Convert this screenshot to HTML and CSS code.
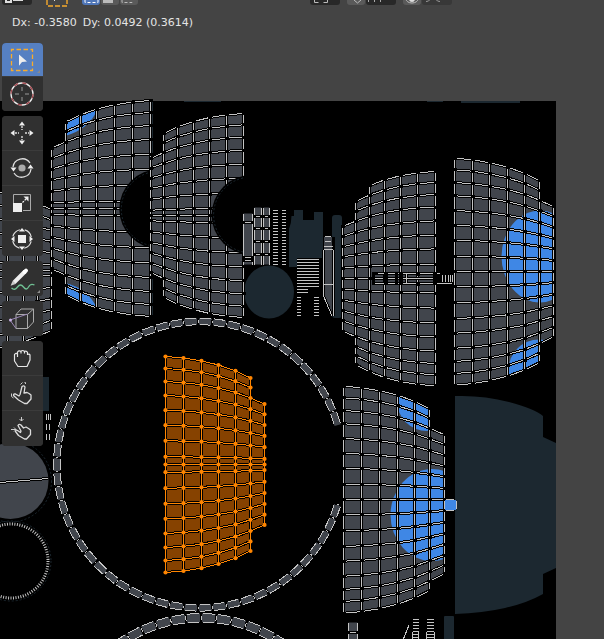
FILE: index.html
```
<!DOCTYPE html>
<html lang="en">
<head>
<meta charset="utf-8">
<title>UV Editor</title>
<link rel="stylesheet" href="styles.css">
</head>
<body>
<main class="editor">
  <svg class="canvas" id="canvas" role="img" aria-label="UV layout"></svg>

  <header class="header">
    <div class="header-set">
      <button class="chip wide" aria-label="Editor type"><svg width="30" height="5"><path d="M4 0v2h5V0M11 0h10" fill="none" stroke="#ddd" stroke-width="2"/></svg></button>
      <button class="chip bare" aria-label="Active tool"><svg width="22" height="7"><path d="M1 0v6h20V0" fill="none" stroke="#f5a92c" stroke-width="1.4" stroke-dasharray="5 2"/><path d="M8 0l1 1" stroke="#ddd"/></svg></button>
      <div class="chips">
        <button class="chip on" aria-label="New selection"><svg width="18" height="5"><path d="M3 0v2.500h13V0" fill="none" stroke="#fff" stroke-dasharray="3 2"/></svg></button>
        <button class="chip mid" aria-label="Extend selection"><svg width="18" height="5"><path d="M2 0h10v3H2z" fill="#bbb"/></svg></button>
        <button class="chip mid" aria-label="Subtract selection"><svg width="18" height="5"><path d="M2 0v2.500h10V0" fill="none" stroke="#bbb" stroke-dasharray="3 2"/></svg></button>
      </div>
    </div>
    <div class="header-set second">
      <button class="chip wide" aria-label="Pivot"><svg width="30" height="5"><path d="M4.500 0v2.500h4M17.500 0v2.500h-4" fill="none" stroke="#bbb"/></svg></button>
      <div class="chips">
        <button class="chip mid" aria-label="Snap"><svg width="18" height="5"><path d="M7 0l3.500 3L14 0" fill="none" stroke="#bbb"/></svg></button>
        <button class="chip wide" aria-label="Snap target"><svg width="30" height="5"><path d="M2.500 0v2M8.500 0v2M14.500 0v2" stroke="#aaa"/></svg></button>
      </div>
      <div class="chips">
        <button class="chip mid" aria-label="Proportional editing"><svg width="18" height="5"><ellipse cx="9" cy="-1" rx="6" ry="4" fill="none" stroke="#bbb"/><circle cx="9" cy="-1" r="3" fill="#ddd"/></svg></button>
        <button class="chip dim" aria-label="Falloff"><svg width="30" height="5"><path d="M4 1.500q3 0 4-2M18 1.500q-3 0-4-2" fill="none" stroke="#999"/></svg></button>
      </div>
    </div>
  </header>

  <p class="status"><span>Dx: -0.3580</span><span>Dy: 0.0492 (0.3614)</span></p>

  <nav class="toolbar" aria-label="Tools">
    <div class="group">
      <button class="tool active more" aria-label="Select box">
        <svg class="icon" viewBox="0 0 26 26"><rect x="2.500" y="2.500" width="21" height="21" fill="none" stroke="#f8ab2c" stroke-width="1.300" stroke-dasharray="4.500 2.500" stroke-dashoffset="2"/><path d="M10 7.500l8 7-5 .6-3 3.600z" fill="#eee"/></svg>
      </button>
      <button class="tool" aria-label="Cursor">
        <svg class="icon" viewBox="0 0 26 26"><g fill="none"><circle cx="13" cy="13" r="11" stroke="#eee" stroke-width="1.300"/><circle cx="13" cy="13" r="11" stroke="#a34a50" stroke-width="1.300" stroke-dasharray="4.320 4.320"/><path d="M13 6v4M13 16v4M6 13h4M16 13h4" stroke="#999"/></g></svg>
      </button>
    </div>
    <div class="group">
      <button class="tool" aria-label="Move">
        <svg class="icon" viewBox="0 0 26 26"><path d="M13 1.500l3 4h-6zM13 24.500l3-4h-6zM1.500 13l4-3v6zM24.500 13l-4-3v6z" fill="#eee"/><path d="M13 6v4M13 16v4M6 13h4M16 13h4" stroke="#ddd" stroke-width="1.400" stroke-dasharray="2 1"/></svg>
      </button>
      <button class="tool" aria-label="Rotate">
        <svg class="icon" viewBox="0 0 26 26"><circle cx="13" cy="13" r="3.600" fill="#aaa"/><path d="M4 12a9.300 9.300 0 0 1 17-4M22 14a9.300 9.300 0 0 1-17 4" fill="none" stroke="#ddd" stroke-width="1.300"/><path d="M1.500 12.500h6l-3 4zM18.500 13.500h6l-3-4z" fill="#eee"/></svg>
      </button>
      <button class="tool" aria-label="Scale">
        <svg class="icon" viewBox="0 0 26 26"><path d="M4.500 13V4.500h17v16H14" fill="none" stroke="#aaa"/><path d="M4 13h9v9H4z" fill="#eee"/><path d="M13.500 12.500l4-4" stroke="#eee" stroke-width="1.300" stroke-dasharray="2 1"/><path d="M19.500 6.500v5l-5-5z" fill="#eee"/></svg>
      </button>
      <button class="tool" aria-label="Transform">
        <svg class="icon" viewBox="0 0 26 26"><circle cx="13" cy="13" r="9.500" fill="none" stroke="#ddd" stroke-width="1.200" stroke-dasharray="10 4.920" stroke-dashoffset="-2.500"/><path d="M9 9h8v8H9zM13 2l3 3.500h-6zM13 24l3-3.500h-6zM2 13l3.500-3v6zM24 13l-3.500-3v6z" fill="#eee"/></svg>
      </button>
    </div>
    <div class="group">
      <button class="tool more" aria-label="Annotate">
        <svg class="icon" viewBox="0 0 26 26"><path d="M2.500 22q3 3 6-1t6 0 5 0 6-2" fill="none" stroke="#6fbf92" stroke-width="1.300"/><path d="M5 16.500L16 5.500" stroke="#eee" stroke-width="4"/><path d="M3.600 15l3 3-5 1.800z" fill="#ccc"/><path d="M15.500 6L17 4.600" stroke="#fff" stroke-width="4" stroke-linecap="round"/></svg>
      </button>
    </div>
    <div class="group">
      <button class="tool" aria-label="Rip region">
        <svg class="icon" viewBox="0 0 26 26"><path d="M7 8.500h11.500v14H7zM7 8.500l5-5.500h12.500l-6 5.500M24.500 3v13l-6 6.500" fill="none" stroke="#aaa"/><path d="M18.500 8L1 14l6 8.500" fill="none" stroke="#9a86b5"/><circle cx="1.500" cy="14" r="1.500" fill="#c9b3e6"/></svg>
      </button>
    </div>
    <div class="group">
      <button class="tool" aria-label="Pan">
        <svg class="icon" viewBox="0 0 26 26"><path d="M9 21.500L5.500 16V9.500q1.500-2 3-.5V7q1.500-2 3.500-.5 1.500-2 3.500 0 2-1 3 1v2q2-1 2.500.5v5L18 21.500zM8.500 9v3M12 6.500v2M15.500 6.500v2M18.500 9v1" fill="none" stroke="#e6e6e6" stroke-width="1.200" stroke-linejoin="round"/></svg>
      </button>
      <button class="tool" aria-label="Grab">
        <svg class="icon" viewBox="0 0 26 26"><path d="M15.500 23.500L9.500 20l-5-4.500q0-2 2-1.500l3.500 2 1-1.500 2-8q2-1.500 3 .5l-1 6 3-.5 2 1 2 1.500V19l-4 4.500z" fill="none" stroke="#ddd" stroke-width="1.300" stroke-linejoin="round"/><path d="M11.500 4.500l2-2M15.500 2.500h1V4M2.500 13.500v3l2 1.500" fill="none" stroke="#ccc"/></svg>
      </button>
      <button class="tool" aria-label="Pinch">
        <svg class="icon" viewBox="0 0 26 26"><path d="M15.500 23L9.500 19.500l-3-4q0-2 2-1l3 2 .5-1.500-3-5.500q1-2 3-.5l2.500 3 2.500-1 2.500 1.500 2 1.500v4.500l-4 4.500z" fill="none" stroke="#ddd" stroke-width="1.300" stroke-linejoin="round"/><path d="M12.500 1v4l-2-2M12.500 5l2-2M2 13.500h5l-2-2M7 13.500l-2 2" fill="none" stroke="#ccc"/></svg>
      </button>
    </div>
  </nav>
</main>
<script src="uv.js"></script>
</body>
</html>
```
FILE: styles.css
```
* {
  box-sizing: border-box;
}

body {
  margin: 0;
  background: #444;
  color: #e4e4e4;
  font: 11px/16px "DejaVu Sans", sans-serif;
}

.editor {
  position: relative;
  min-height: 100vh;
  overflow: hidden;
}

.canvas {
  position: absolute;
  inset: 0;
  width: 100%;
  height: 100%;
}

.header,
.status,
.toolbar {
  position: relative;
}

.header {
  display: flex;
  height: 7px;
  padding-left: 2px;
}

.header-set {
  display: flex;
  gap: 14px;
}

.header-set.second {
  gap: 7px;
  margin-left: 172px;
}

.chips {
  display: flex;
  gap: 1px;
}

button {
  padding: 0;
  border: 0;
  color: inherit;
  font: inherit;
}

.chip {
  display: flex;
  width: 18px;
  height: 5px;
  background: #282828;
  border-radius: 0 0 3px 3px;
}

.chip.wide {
  width: 30px;
}

.chip.bare {
  width: 22px;
  height: 7px;
  background: none;
}

.chip.on {
  background: #4f76b8;
}

.chip.mid {
  background: #5a5a5a;
}

.chip.dim {
  width: 30px;
  background: #383838;
}

.status {
  display: flex;
  gap: 6px;
  margin: 0;
  padding: 8px 12px 12px;
}

.toolbar {
  display: flex;
  flex-direction: column;
  gap: 5px;
  width: 41px;
  margin-left: 2px;
}

.group {
  overflow: hidden;
  background: #303030;
  border-radius: 4px;
}

.tool {
  position: relative;
  display: flex;
  align-items: center;
  justify-content: center;
  width: 100%;
  height: 35px;
  padding-right: 2px;
  background: #303030;
}

.tool:not(:last-child) {
  border-bottom: 1px solid #3b3b3b;
}

.group:first-child .tool {
  height: 34px;
}

.tool.active {
  background: #5680c2;
}

.tool.more::after {
  content: "";
  position: absolute;
  right: 3px;
  bottom: 3px;
  border-bottom: 3px solid #8a8a8a;
  border-left: 3px solid transparent;
}

.icon {
  width: 26px;
  height: 26px;
}

.face {
  fill: #41454c;
}

.back {
  fill: #1c2830;
}

.paint {
  fill: #3f87e5;
}

.void {
  fill: #000;
}

.rim {
  fill: none;
  stroke: #1c2830;
  stroke-dasharray: 2 2;
}

.shade,
.wire {
  fill: none;
  shape-rendering: crispEdges;
}

.shade {
  stroke: #000;
  stroke-width: 3px;
}

.shade.thin {
  stroke-width: 2px;
}

.wire {
  stroke: #c4c4c4;
  stroke-width: 1px;
}

.dots {
  fill: #000;
  shape-rendering: crispEdges;
}

.selected .face {
  fill: #864200;
}

.selected .wire {
  stroke: #ff8500;
}

.selected .dots {
  fill: #ff8500;
  shape-rendering: auto;
}
```
FILE: uv.js
```
const root = document.getElementById('canvas');
let out = '';
let clipCount = 0;

// Height of every column relative to the tallest one.
const PROFILE = [1, 0.986, 0.96, 0.921, 0.868, 0.801, 0.728];
// Row offsets from the centre line.
const BANDED = [-108, -96, -83, -69, -54.3, -39.3, -23.7, -7.7, 0, 7.7, 23.7, 39.3, 54.3, 69, 83, 96, 108];
const EVEN = [-113.3, -101.7, -89, -75.7, -61, -46, -31.3, -15.3, 0, 15.3, 31.3, 47, 61.7, 76.7, 90, 102, 113.7];

const r1 = n => Math.round(n * 10) / 10;

function mesh(m) {
  const y = (c, r) => m.cy + m.rows[r] * (m.scale || 1) * PROFILE[c];
  const range = c => (m.ranges && m.ranges[c]) || (c === 6 ? [2, 14] : [0, 16]);
  const inBite = (px, py) => m.bite && Math.hypot(px - m.bite[0], py - m.bite[1]) < m.bite[2];
  let face = '', lines = '', dots = '';
  const s = m.dot || 4;
  for (let c = 0; c < 7; c++) {
    const [a, b] = range(c);
    lines += `M${r1(m.x[c])} ${r1(y(c, a))}V${r1(y(c, b))}`;
    for (let r = a; r <= b; r++) {
      const px = m.x[c], py = y(c, r);
      if (!inBite(px, py)) {
        dots += m.selected
          ? `<circle cx="${r1(px)}" cy="${r1(py)}" r="2.1"/>`
          : `<rect x="${r1(px - s / 2)}" y="${r1(py - 1.5)}" width="${s}" height="3"/>`;
      }
    }
    if (c < 6) {
      const [na, nb] = range(c + 1);
      const lo = Math.max(a, na), hi = Math.min(b, nb);
      const x0 = m.x[c], x1 = m.x[c + 1];
      face += `M${r1(x0)} ${r1(y(c, lo))}L${r1(x1)} ${r1(y(c + 1, lo))}V${r1(y(c + 1, hi))}L${r1(x0)} ${r1(y(c, hi))}Z`;
      for (let r = lo; r <= hi; r++) {
        lines += `M${r1(x0)} ${r1(y(c, r))}L${r1(x1)} ${r1(y(c + 1, r))}`;
      }
    }
  }
  const id = 'clip' + clipCount++;
  out += `<clipPath id="${id}"><path d="${face}"/></clipPath>`;
  out += `<g class="${m.selected ? 'selected' : ''}"><path class="face" d="${face}"/>`;
  if (m.paint) out += `<g class="paint" clip-path="url(#${id})">${m.paint}</g>`;
  out += `<path class="shade" d="${lines}"/><path class="wire" d="${lines}"/>`;
  if (m.bite) {
    const [bx, by, br] = m.bite;
    out += `<circle class="void" cx="${bx}" cy="${by}" r="${br}"/><g clip-path="url(#${id})"><circle class="rim" cx="${bx}" cy="${by}" r="${br - 2}"/></g>`;
  }
  out += `<g class="dots">${dots}</g></g>`;
}

// A ring of short quads between two radii, from angle a0 to a1 in degrees.
function ring(cx, cy, inner, outer, a0, a1, count) {
  const step = (a1 - a0) / count;
  const at = (r, a) => {
    const t = a * Math.PI / 180;
    return `${r1(cx + r * Math.cos(t))} ${r1(cy + r * Math.sin(t))}`;
  };
  let quads = '', joints = '', marks = '', sides = '';
  for (let i = 0; i < count; i++) {
    const a = a0 + i * step, pad = 0.7;
    quads += `M${at(inner, a)}L${at(outer, a)}L${at(outer, a + step)}L${at(inner, a + step)}Z`;
    sides += `M${at(outer, a + pad)}L${at(outer, a + step - pad)}M${at(inner, a + pad)}L${at(inner, a + step - pad)}`;
    joints += `M${at(inner - 1, a)}L${at(outer + 1, a)}`;
    marks += `M${at(inner + 2, a)}L${at(outer - 2, a)}`;
  }
  out += `<path class="face" d="${quads}"/><path class="shade thin" d="${joints}"/>`;
  out += `<path class="wire" d="${sides}"/><path class="wire" d="${marks}"/>`;
}

const rect = (cls, x, y, w, h, rx = 0) => {
  out += `<rect class="${cls}" x="${x}" y="${y}" width="${w}" height="${h}" rx="${rx}"/>`;
};
const path = (cls, d) => { out += `<path class="${cls}" d="${d}"/>`; };

// Narrow strip of quads with cross lines at the given heights.
function strip(x, y, w, h, cuts) {
  rect('face', x, y, w, h);
  const rungs = cuts.map(c => `M${x} ${c}h${w}`).join('');
  path('shade', rungs);
  path('wire', `M${x} ${y}v${h}M${x + w} ${y}v${h}` + rungs);
  out += '<g class="dots">' + cuts.map(c => `<rect x="${x - 1.5}" y="${c - 1.5}" width="3" height="3"/><rect x="${x + w - 1.5}" y="${c - 1.5}" width="3" height="3"/>`).join('') + '</g>';
}

function hatch(x, y, w, h, step) {
  let d = '';
  for (let v = y; v < y + h; v += step) d += `M${x} ${v + 0.5}h${w}`;
  path('wire', d);
}

out += '<rect class="void" x="0" y="101" width="556" height="100%"/>';

// Islands of the other objects
rect('back', 427, 101, 16, 1);
rect('back', 461, 101, 59, 2);
rect('back', 184, 101, 37, 1);
path('back', 'M455 396q28-1 54 6t34 14v21l13 6v125l-13 6v20q-16 9-38 14t-50 6z');
path('back', 'M289 216h5v-6h9v10h11v-8h9v46h-26v9h-8z');
rect('back', 332, 215, 10, 103, 3);
out += '<ellipse class="back" cx="269" cy="292" rx="25" ry="26.500"/>';
rect('back', 43, 377, 6, 34);
rect('back', 444, 616, 10, 40, 1);
rect('back', 151, 102, 2, 55);
rect('back', 151, 277, 2, 41);

mesh({ x: [-44, -27, -10, 7.3, 23.3, 37.7, 51.5], cy: 270, rows: BANDED, ranges: [[2, 14], [2, 14], [2, 14], [2, 14], [2, 14], [2, 14], [2, 14]] });
mesh({
  x: [150.5, 132.5, 114.5, 96.5, 80.5, 65.5, 51.5], cy: 208.5, rows: BANDED, bite: [159, 209, 39.7],
  paint: '<path d="M65 120L98 108Q90 129 65 136zM65 283Q88 288 98 310L65 300z"/>'
});
mesh({ x: [243.5, 226.5, 209.5, 193.5, 177.5, 163.5, 150.5], cy: 215.5, rows: BANDED, scale: 0.945, bite: [251.6, 215, 40] });
mesh({
  x: [435.5, 417.5, 400.5, 384.5, 369.5, 355.5, 342.5], cy: 278.5, rows: EVEN, scale: 0.945,
  ranges: { 5: [1, 16], 6: [3, 13] }
});
mesh({
  x: [454.5, 472.5, 489.5, 507.5, 524.5, 539.5, 553.5], cy: 271.5, rows: EVEN,
  paint: '<ellipse cx="540" cy="256.500" rx="38.500" ry="46"/><circle cx="539" cy="370" r="30.500"/>'
});
mesh({
  x: [343.5, 361.5, 379.5, 397.5, 414.5, 429.5, 444.5], cy: 499.500, rows: EVEN, ranges: { 6: [2, 15] },
  paint: '<ellipse cx="432" cy="515" rx="41.500" ry="46"/><circle cx="427" cy="401" r="30"/>'
});
rect('paint', 445, 500, 11, 10);
path('wire', 'M446 499.500H454M456.500 501V509M446 510.500H454');

// Handle strip that crosses the middle island
path('shade', 'M373 273.500H440M373 283.500H452M373 273.500V284M396 273V284M406 273V284');
path('wire', 'M378 273.500H440M373 283.500H452M400 278.500H434M406.500 273V284M442.500 275v7M445.500 275v7M448.500 275v7M450.500 275v7M452.500 275v7');
path('shade', 'M373.500 272V285M396.500 272V285M401.500 272V285');
out += '<g class="dots"><rect x="384" y="272" width="4" height="13"/><rect x="399" y="272" width="4" height="13"/><rect x="416" y="272" width="4" height="4"/><rect x="416" y="282" width="4" height="4"/><rect x="433" y="272" width="4" height="13"/></g>';

// Small parts
strip(243.5, 213.5, 9, 51, [222.5, 257.5, 260.5]);
strip(254.5, 207.5, 7, 57, [216.5, 228.5, 241.5, 254.5]);
strip(263.5, 207.5, 6, 57, [216.5, 228.5, 241.5, 254.5]);
hatch(273, 210, 5, 56, 3);
hatch(282, 210, 4, 56, 3);
hatch(297, 259, 22, 30, 3);
hatch(297, 289, 11, 6, 3);
hatch(297, 297, 4, 21, 3);
hatch(314, 297, 5, 21, 3);
path('face', 'M324 237h9v79h-2l-7-20z');
path('shade', 'M323.500 250V296L332 316M333.500 237V316');
path('wire', 'M323.500 250V296L332 316M333.500 250V316M325 236.500h6M325 241.500h6M324 246.500h9M324 249.500h9M324 284.500h9');

ring(200, 464.7, 140, 146.500, 16, 344, 57);
ring(201, 760, 138, 146.500, 215, 325, 18);

// Selected island
mesh({ x: [165.5, 183.5, 201.5, 218.5, 235.5, 250.5, 264.5], cy: 464.5, rows: BANDED, selected: true });

// Caps on the left edge
out += '<circle class="face" cx="10.500" cy="481" r="38"/>';
path('shade', 'M0 482.500L48 478.500');
path('wire', 'M0 482.500L48 478.500');
out += '<circle class="rim" cx="10.500" cy="481" r="41"/>';
out += '<circle cx="11" cy="561" r="37" fill="none" stroke="#c4c4c4" stroke-width="3" stroke-dasharray="1 1.500"/>';
out += '<circle class="rim" cx="11" cy="561" r="40"/>';
path('wire', 'M46.500 414v6M48.500 414v6M50.500 414v6M46.500 424v6M49.500 424v6M46.500 434v6M49.500 434v6');

// Parts cut off by the lower edge
strip(348.5, 622.5, 9, 30, [632.5]);
path('wire', 'M403 640l6-15M412.500 632v8M418.500 632v8M426.500 632v8M434.500 632v8');
hatch(413, 619, 6, 20, 3);
hatch(427, 619, 7, 20, 3);

root.innerHTML = out;
```
